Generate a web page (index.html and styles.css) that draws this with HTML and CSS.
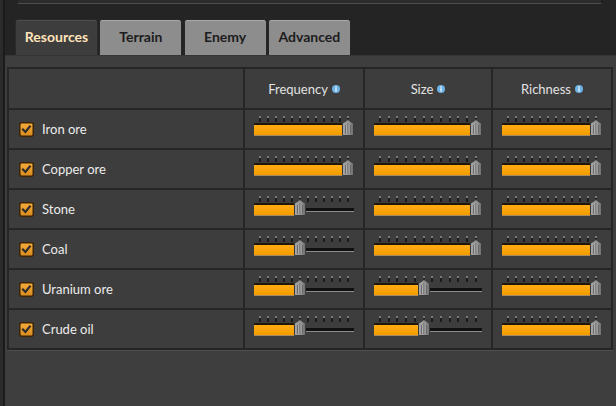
FILE: index.html
```html
<!DOCTYPE html>
<html>
<head>
<meta charset="utf-8">
<link rel="stylesheet" href="styles.css">
</head>
<body>
<div class="app">
  <div class="win">
    <div class="topbar"></div>
    <div class="tabs">
      <div class="tab active">Resources</div>
      <div class="tab">Terrain</div>
      <div class="tab">Enemy</div>
      <div class="tab">Advanced</div>
    </div>
    <div class="panel">
      <div class="table">
        <div class="cell head"></div>
        <div class="cell head">Frequency<svg class="info" viewBox="0 0 8 8"><circle cx="4" cy="4" r="4"/><rect x="3.3" y="3.3" width="1.4" height="3.2"/><rect x="3.3" y="1.4" width="1.4" height="1.3"/></svg></div>
        <div class="cell head">Size<svg class="info" viewBox="0 0 8 8"><circle cx="4" cy="4" r="4"/><rect x="3.3" y="3.3" width="1.4" height="3.2"/><rect x="3.3" y="1.4" width="1.4" height="1.3"/></svg></div>
        <div class="cell head">Richness<svg class="info" viewBox="0 0 8 8"><circle cx="4" cy="4" r="4"/><rect x="3.3" y="3.3" width="1.4" height="3.2"/><rect x="3.3" y="1.4" width="1.4" height="1.3"/></svg></div>

        <!-- Iron ore -->
        <div class="cell name"><svg class="check" viewBox="0 0 15 15"><defs><linearGradient id="cg" x1="0" y1="0" x2="0" y2="1"><stop offset="0" stop-color="#f6ad3c"/><stop offset="1" stop-color="#d98a1e"/></linearGradient></defs><rect x="0.75" y="0.75" width="13.5" height="13.5" rx="2" fill="url(#cg)" stroke="#3b2508" stroke-width="1.5"/><path d="M4 7.6 L6.4 10 L10.8 4.6" fill="none" stroke="#2b2b2b" stroke-width="2.1" stroke-linecap="square"/></svg><span>Iron ore</span></div>
        <div class="cell s"><div class="slider" style="--p:1"><div class="ticks"><i></i><i></i><i></i><i></i><i></i><i></i><i></i><i></i><i></i><i></i><i></i><i></i></div><div class="track"><div class="fill"></div><div class="rail"></div></div><svg class="thumb" viewBox="0 0 12 17"><use href="#th"/></svg></div></div>
        <div class="cell s"><div class="slider" style="--p:1"><div class="ticks"><i></i><i></i><i></i><i></i><i></i><i></i><i></i><i></i><i></i><i></i><i></i><i></i></div><div class="track"><div class="fill"></div><div class="rail"></div></div><svg class="thumb" viewBox="0 0 12 17"><use href="#th"/></svg></div></div>
        <div class="cell s"><div class="slider" style="--p:1"><div class="ticks"><i></i><i></i><i></i><i></i><i></i><i></i><i></i><i></i><i></i><i></i><i></i><i></i></div><div class="track"><div class="fill"></div><div class="rail"></div></div><svg class="thumb" viewBox="0 0 12 17"><use href="#th"/></svg></div></div>

        <!-- Copper ore -->
        <div class="cell name"><svg class="check" viewBox="0 0 15 15"><rect x="0.75" y="0.75" width="13.5" height="13.5" rx="2" fill="url(#cg)" stroke="#3b2508" stroke-width="1.5"/><path d="M4 7.6 L6.4 10 L10.8 4.6" fill="none" stroke="#2b2b2b" stroke-width="2.1" stroke-linecap="square"/></svg><span>Copper ore</span></div>
        <div class="cell s"><div class="slider" style="--p:1"><div class="ticks"><i></i><i></i><i></i><i></i><i></i><i></i><i></i><i></i><i></i><i></i><i></i><i></i></div><div class="track"><div class="fill"></div><div class="rail"></div></div><svg class="thumb" viewBox="0 0 12 17"><use href="#th"/></svg></div></div>
        <div class="cell s"><div class="slider" style="--p:1"><div class="ticks"><i></i><i></i><i></i><i></i><i></i><i></i><i></i><i></i><i></i><i></i><i></i><i></i></div><div class="track"><div class="fill"></div><div class="rail"></div></div><svg class="thumb" viewBox="0 0 12 17"><use href="#th"/></svg></div></div>
        <div class="cell s"><div class="slider" style="--p:1"><div class="ticks"><i></i><i></i><i></i><i></i><i></i><i></i><i></i><i></i><i></i><i></i><i></i><i></i></div><div class="track"><div class="fill"></div><div class="rail"></div></div><svg class="thumb" viewBox="0 0 12 17"><use href="#th"/></svg></div></div>

        <!-- Stone -->
        <div class="cell name"><svg class="check" viewBox="0 0 15 15"><rect x="0.75" y="0.75" width="13.5" height="13.5" rx="2" fill="url(#cg)" stroke="#3b2508" stroke-width="1.5"/><path d="M4 7.6 L6.4 10 L10.8 4.6" fill="none" stroke="#2b2b2b" stroke-width="2.1" stroke-linecap="square"/></svg><span>Stone</span></div>
        <div class="cell s"><div class="slider" style="--p:0.4545"><div class="ticks"><i></i><i></i><i></i><i></i><i></i><i></i><i></i><i></i><i></i><i></i><i></i><i></i></div><div class="track"><div class="fill"></div><div class="rail"></div></div><svg class="thumb" viewBox="0 0 12 17"><use href="#th"/></svg></div></div>
        <div class="cell s"><div class="slider" style="--p:1"><div class="ticks"><i></i><i></i><i></i><i></i><i></i><i></i><i></i><i></i><i></i><i></i><i></i><i></i></div><div class="track"><div class="fill"></div><div class="rail"></div></div><svg class="thumb" viewBox="0 0 12 17"><use href="#th"/></svg></div></div>
        <div class="cell s"><div class="slider" style="--p:1"><div class="ticks"><i></i><i></i><i></i><i></i><i></i><i></i><i></i><i></i><i></i><i></i><i></i><i></i></div><div class="track"><div class="fill"></div><div class="rail"></div></div><svg class="thumb" viewBox="0 0 12 17"><use href="#th"/></svg></div></div>

        <!-- Coal -->
        <div class="cell name"><svg class="check" viewBox="0 0 15 15"><rect x="0.75" y="0.75" width="13.5" height="13.5" rx="2" fill="url(#cg)" stroke="#3b2508" stroke-width="1.5"/><path d="M4 7.6 L6.4 10 L10.8 4.6" fill="none" stroke="#2b2b2b" stroke-width="2.1" stroke-linecap="square"/></svg><span>Coal</span></div>
        <div class="cell s"><div class="slider" style="--p:0.4545"><div class="ticks"><i></i><i></i><i></i><i></i><i></i><i></i><i></i><i></i><i></i><i></i><i></i><i></i></div><div class="track"><div class="fill"></div><div class="rail"></div></div><svg class="thumb" viewBox="0 0 12 17"><use href="#th"/></svg></div></div>
        <div class="cell s"><div class="slider" style="--p:1"><div class="ticks"><i></i><i></i><i></i><i></i><i></i><i></i><i></i><i></i><i></i><i></i><i></i><i></i></div><div class="track"><div class="fill"></div><div class="rail"></div></div><svg class="thumb" viewBox="0 0 12 17"><use href="#th"/></svg></div></div>
        <div class="cell s"><div class="slider" style="--p:1"><div class="ticks"><i></i><i></i><i></i><i></i><i></i><i></i><i></i><i></i><i></i><i></i><i></i><i></i></div><div class="track"><div class="fill"></div><div class="rail"></div></div><svg class="thumb" viewBox="0 0 12 17"><use href="#th"/></svg></div></div>

        <!-- Uranium ore -->
        <div class="cell name"><svg class="check" viewBox="0 0 15 15"><rect x="0.75" y="0.75" width="13.5" height="13.5" rx="2" fill="url(#cg)" stroke="#3b2508" stroke-width="1.5"/><path d="M4 7.6 L6.4 10 L10.8 4.6" fill="none" stroke="#2b2b2b" stroke-width="2.1" stroke-linecap="square"/></svg><span>Uranium ore</span></div>
        <div class="cell s"><div class="slider" style="--p:0.4545"><div class="ticks"><i></i><i></i><i></i><i></i><i></i><i></i><i></i><i></i><i></i><i></i><i></i><i></i></div><div class="track"><div class="fill"></div><div class="rail"></div></div><svg class="thumb" viewBox="0 0 12 17"><use href="#th"/></svg></div></div>
        <div class="cell s"><div class="slider" style="--p:0.4545"><div class="ticks"><i></i><i></i><i></i><i></i><i></i><i></i><i></i><i></i><i></i><i></i><i></i><i></i></div><div class="track"><div class="fill"></div><div class="rail"></div></div><svg class="thumb" viewBox="0 0 12 17"><use href="#th"/></svg></div></div>
        <div class="cell s"><div class="slider" style="--p:1"><div class="ticks"><i></i><i></i><i></i><i></i><i></i><i></i><i></i><i></i><i></i><i></i><i></i><i></i></div><div class="track"><div class="fill"></div><div class="rail"></div></div><svg class="thumb" viewBox="0 0 12 17"><use href="#th"/></svg></div></div>

        <!-- Crude oil -->
        <div class="cell name"><svg class="check" viewBox="0 0 15 15"><rect x="0.75" y="0.75" width="13.5" height="13.5" rx="2" fill="url(#cg)" stroke="#3b2508" stroke-width="1.5"/><path d="M4 7.6 L6.4 10 L10.8 4.6" fill="none" stroke="#2b2b2b" stroke-width="2.1" stroke-linecap="square"/></svg><span>Crude oil</span></div>
        <div class="cell s"><div class="slider" style="--p:0.4545"><div class="ticks"><i></i><i></i><i></i><i></i><i></i><i></i><i></i><i></i><i></i><i></i><i></i><i></i></div><div class="track"><div class="fill"></div><div class="rail"></div></div><svg class="thumb" viewBox="0 0 12 17"><use href="#th"/></svg></div></div>
        <div class="cell s"><div class="slider" style="--p:0.4545"><div class="ticks"><i></i><i></i><i></i><i></i><i></i><i></i><i></i><i></i><i></i><i></i><i></i><i></i></div><div class="track"><div class="fill"></div><div class="rail"></div></div><svg class="thumb" viewBox="0 0 12 17"><use href="#th"/></svg></div></div>
        <div class="cell s"><div class="slider" style="--p:1"><div class="ticks"><i></i><i></i><i></i><i></i><i></i><i></i><i></i><i></i><i></i><i></i><i></i><i></i></div><div class="track"><div class="fill"></div><div class="rail"></div></div><svg class="thumb" viewBox="0 0 12 17"><use href="#th"/></svg></div></div>
      </div>
    </div>
  </div>
</div>
<svg class="defs" width="0" height="0">
  <defs>
    <linearGradient id="tg" x1="0" y1="0" x2="1" y2="0">
      <stop offset="0" stop-color="#a9a9a9"/>
      <stop offset="0.5" stop-color="#959595"/>
      <stop offset="1" stop-color="#6f6f6f"/>
    </linearGradient>
    <g id="th">
      <path d="M6 0.5 L11.5 4.5 L11.5 16.5 L0.5 16.5 L0.5 4.5 Z" fill="url(#tg)" stroke="#3a3a3a" stroke-width="1"/>
      <path d="M3.5 6 V15 M6 4 V15 M8.5 6 V15" stroke="#6a6a6a" stroke-width="1"/>
      <path d="M4.5 6 V15 M7 4 V15" stroke="#b8b8b8" stroke-width="0.6"/>
    </g>
  </defs>
</svg>
</body>
</html>
```

FILE: styles.css
```css
* { box-sizing: border-box; }

html, body {
  margin: 0;
  padding: 0;
}

body {
  width: 616px;
  height: 406px;
  overflow: hidden;
  background: #242424;
  font-family: Lato, "Open Sans", sans-serif;
}

.app {
  height: 406px;
  border-left: 3px solid #2b2b2b;
}

.win {
  height: 100%;
  display: flex;
  flex-direction: column;
  border-left: 2px solid #1b1b1b;
}

.topbar {
  height: 4px;
  margin-left: 13px;
  width: 584px;
  background: #2b2b2b;
  border-bottom: 1px solid #4c4c4c;
  border-right: 1px solid #1a1a1a;
}

.tabs {
  display: flex;
  gap: 1.3px;
  margin-top: 15px;
  padding-left: 10px;
  height: 36px;
}

.tab {
  width: 83px;
  height: 36px;
  display: flex;
  align-items: center;
  justify-content: center;
  padding-bottom: 2px;
  font-weight: 700;
  font-size: 14px;
  color: #1c1c1c;
  background: #8d8d8d;
  border: 1px solid #262626;
  border-bottom: none;
  border-radius: 3px 3px 0 0;
  box-shadow: inset 0 1px 0 #a9a9a9;
}

.tab.active {
  color: #ffe3b9;
  background: #3d3d3d;
  box-shadow: inset 0 1px 0 #4e4e4e;
  border-color: #2a2a2a;
}

.panel {
  flex: 1;
  background: #3e3e3e;
  border-top: 1px solid #353535;
  padding: 11px 3px 0 2px;
}

.table {
  display: grid;
  grid-template-columns: 234px 118px 126px 118px;
  grid-template-rows: 39px repeat(6, 38px);
  gap: 2px;
  padding: 2px;
  background: #262626;
  box-shadow: 0 1px 0 #4e4e4e;
}

.cell {
  background: #3d3d3d;
}

.head {
  display: flex;
  align-items: center;
  justify-content: center;
  gap: 4px;
  color: #e2e2e2;
  font-size: 13px;
}

.info {
  width: 8px;
  height: 8px;
  margin-top: 1px;
}

.info circle { fill: #6db3e6; }
.info rect { fill: #f2f6fa; }

.name {
  display: flex;
  align-items: center;
  gap: 8px;
  padding-left: 10px;
  color: #ececec;
  font-size: 13px;
}

.check {
  width: 15px;
  height: 15px;
  margin-top: 1px;
}

.s {
  padding: 6px 9px 0;
}

.slider {
  position: relative;
}

.ticks {
  display: flex;
  justify-content: space-between;
  padding: 0 5px;
  height: 6px;
}

.ticks i {
  width: 2px;
  height: 6px;
  background: linear-gradient(#7a7a7a 0 2px, #1b1b1b 2px);
}

.track {
  display: flex;
  align-items: flex-start;
  height: 13px;
  margin-top: 1px;
}

.fill {
  width: calc(6px + (100% - 12px) * var(--p));
  height: 13px;
  border-top: 2px solid #20170a;
  border-bottom: 1px solid #a48a62;
  background: linear-gradient(#ffac14, #f39c00);
}

.rail {
  flex: 1;
  min-width: 0;
  height: 4px;
  margin-top: 5px;
  background: #111;
  border-bottom: 1px solid #8c8c8c;
}

.thumb {
  position: absolute;
  top: 3px;
  left: calc((100% - 12px) * var(--p));
  width: 12px;
  height: 17px;
}

.defs {
  position: absolute;
  width: 0;
  height: 0;
}
```
